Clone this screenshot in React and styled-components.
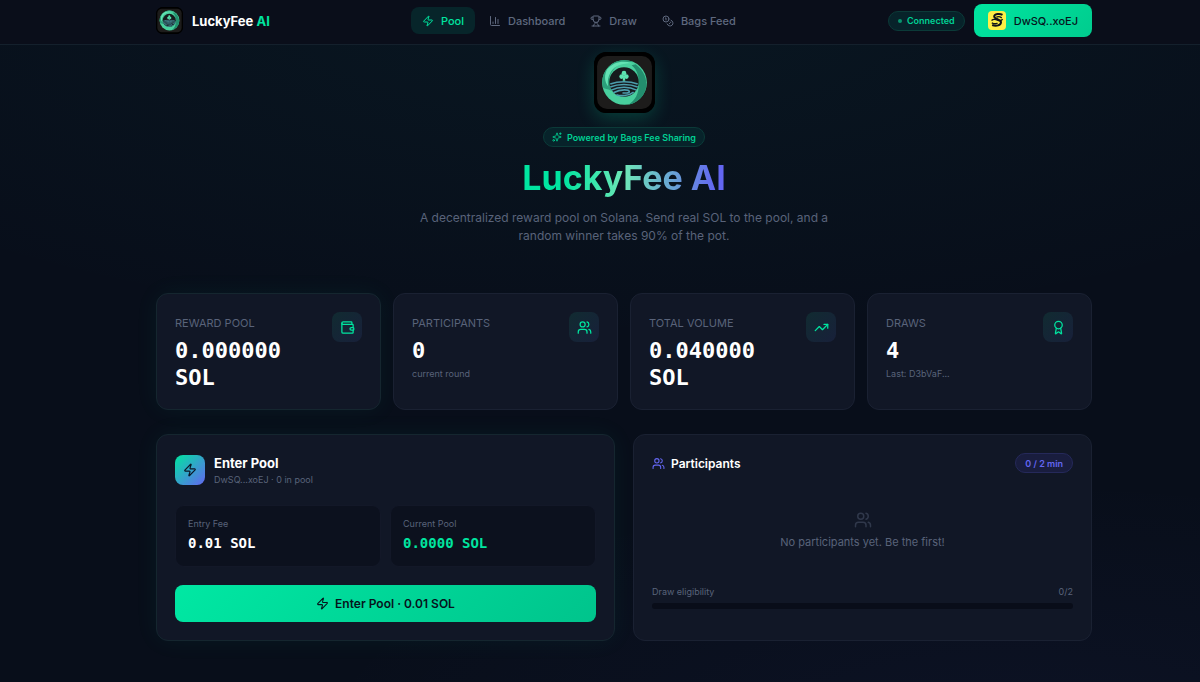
import React from "react";
import styled, { createGlobalStyle, css } from "styled-components";
import {
  Zap,
  BarChart3,
  Trophy,
  Coins,
  Sparkles,
  Wallet,
  Users,
  TrendingUp,
  Award
} from "lucide-react";

const green = "#00e5a0";
const violet = "#6366f1";
const muted = "#59637a";
const mono = `"DejaVu Sans Mono", monospace`;

const GlobalStyle = createGlobalStyle`
  * {
    box-sizing: border-box;
  }
  body {
    margin: 0;
    min-height: 100vh;
    color: #ffffff;
    font-family: Inter, sans-serif;
    font-size: 12px;
    background:
      radial-gradient(ellipse 80% 50% at 50% 0%, rgba(20, 190, 170, 0.05), transparent 100%),
      radial-gradient(ellipse 60% 40% at 85% 110%, rgba(99, 102, 241, 0.05), transparent 100%),
      #080e1a;
  }
  h1, h2, p {
    margin: 0;
  }
  button {
    font-family: inherit;
    cursor: pointer;
  }
`;

const Header = styled.header`
  display: flex;
  align-items: center;
  justify-content: space-between;
  padding: 4px 9% 7px 13%;
  background: #0a0e1a;
  border-bottom: 1px solid #14202c;
`;

const Brand = styled.a`
  display: flex;
  align-items: center;
  gap: 9px;
  color: #ffffff;
  font-size: 13px;
  font-weight: 700;
  text-decoration: none;
  span span {
    color: ${green};
  }
`;

const LogoFrame = styled.div`
  width: ${({ $large }) => ($large ? 61 : 27)}px;
  height: ${({ $large }) => ($large ? 61 : 27)}px;
  border-radius: ${({ $large }) => ($large ? 12 : 7)}px;
  overflow: hidden;
  background: #000000;
  box-shadow: ${({ $large }) =>
    $large ? "0 6px 18px rgba(0, 229, 160, 0.2)" : "none"};
  svg {
    display: block;
    width: 100%;
    height: 100%;
  }
`;

const Nav = styled.nav`
  display: flex;
  gap: 3px;
`;

const NavLink = styled.a`
  display: flex;
  align-items: center;
  gap: 7px;
  height: 27px;
  padding: 0 11px;
  border-radius: 8px;
  font-size: 11px;
  font-weight: 500;
  text-decoration: none;
  color: ${({ $active }) => ($active ? green : "#5f697f")};
  background: ${({ $active }) => ($active ? "#07252a" : "transparent")};
`;

const Account = styled.div`
  display: flex;
  align-items: center;
  gap: 9px;
`;

const Pill = styled.span`
  display: inline-flex;
  align-items: center;
  gap: 5px;
  height: 20px;
  padding: 0 9px;
  border-radius: 10px;
  font-size: 9px;
  font-weight: 600;
  ${({ $violet }) =>
    $violet
      ? css`
          color: ${violet};
          background: #191d3e;
          border: 1px solid #25295a;
        `
      : css`
          color: #00d194;
          background: #07232a;
          border: 1px solid #0b3a38;
        `}
`;

const Dot = styled.i`
  width: 4px;
  height: 4px;
  border-radius: 50%;
  background: #08946e;
`;

const WalletButton = styled.button`
  display: flex;
  align-items: center;
  gap: 8px;
  height: 33px;
  padding: 0 14px;
  border: none;
  border-radius: 8px;
  color: #07131c;
  font-size: 11px;
  font-weight: 500;
  background: linear-gradient(135deg, #00e5a0, #00cc8e);
`;

const Main = styled.main`
  padding: 7px 9% 41px 13%;
`;

const Hero = styled.section`
  display: flex;
  flex-direction: column;
  align-items: center;
  text-align: center;
  margin-bottom: 48px;
`;

const HeroPill = styled(Pill)`
  margin-top: 14px;
  padding: 0 8px;
`;

const Title = styled.h1`
  margin-top: 9px;
  font-size: 34px;
  line-height: 44px;
  font-weight: 700;
  color: transparent;
  background: linear-gradient(90deg, ${green} 0%, ${green} 20%, #6ee7b7 50%, ${violet} 95%);
  background-clip: text;
`;

const Lead = styled.p`
  max-width: 420px;
  margin-top: 9px;
  color: ${muted};
  font-size: 12px;
  line-height: 18px;
`;

const Stats = styled.section`
  display: grid;
  grid-template-columns: repeat(4, 1fr);
  gap: 12px;
  margin-bottom: 24px;
`;

const Card = styled.section`
  padding: 18px;
  border: 1px solid ${({ $glow }) => ($glow ? "#15262f" : "#1a2132")};
  border-radius: 12px;
  background: #111726;
  box-shadow: ${({ $glow }) =>
    $glow ? "0 0 24px rgba(0, 229, 160, 0.06)" : "none"};
`;

const StatCard = styled(Card)`
  display: flex;
  justify-content: space-between;
  min-height: 117px;
`;

const StatLabel = styled.p`
  margin-top: 3px;
  color: ${muted};
  font-size: 11px;
  line-height: 16px;
  text-transform: uppercase;
`;

const StatValue = styled.p`
  margin-top: 6px;
  font-family: ${mono};
  font-size: 22px;
  font-weight: 700;
  line-height: 27px;
`;

const StatNote = styled.p`
  margin-top: 3px;
  color: ${muted};
  font-size: 9px;
  line-height: 14px;
`;

const IconTile = styled.div`
  display: flex;
  flex-shrink: 0;
  align-items: center;
  justify-content: center;
  width: 30px;
  height: 30px;
  border-radius: 8px;
  color: ${({ $solid }) => ($solid ? "#0b1626" : green)};
  background: ${({ $solid }) =>
    $solid
      ? `linear-gradient(135deg, #00e5a0, ${violet})`
      : "linear-gradient(135deg, #112b31, #18203a)"};
`;

const Panels = styled.div`
  display: grid;
  grid-template-columns: 1fr 1fr;
  gap: 18px;
`;

const Panel = styled(Card)`
  display: flex;
  flex-direction: column;
  min-height: 207px;
`;

const PoolHead = styled.div`
  display: flex;
  align-items: center;
  gap: 9px;
  margin-bottom: 18px;
`;

const PoolTitle = styled.h2`
  font-size: 13px;
  line-height: 20px;
  font-weight: 700;
`;

const Small = styled.p`
  color: ${muted};
  font-size: 9px;
  line-height: 14px;
`;

const Figures = styled.div`
  display: grid;
  grid-template-columns: 1fr 1fr;
  gap: 9px;
  margin-bottom: 18px;
`;

const Figure = styled.div`
  padding: 11px 12px 12px;
  border: 1px solid #131828;
  border-radius: 9px;
  background: #0c111e;
`;

const FigureValue = styled.p`
  margin-top: 2px;
  font-family: ${mono};
  font-size: 14px;
  font-weight: 700;
  line-height: 21px;
  color: ${({ $green }) => ($green ? green : "#ffffff")};
`;

const EnterButton = styled.button`
  display: flex;
  align-items: center;
  justify-content: center;
  gap: 6px;
  height: 37px;
  border: none;
  border-radius: 8px;
  color: #07131c;
  font-size: 12px;
  font-weight: 600;
  background: linear-gradient(135deg, #00e8a3, #00c48c);
`;

const ListHead = styled.div`
  display: flex;
  align-items: center;
  justify-content: space-between;
`;

const ListTitle = styled.h2`
  display: flex;
  align-items: center;
  gap: 6px;
  font-size: 12px;
  font-weight: 600;
  svg {
    color: ${violet};
  }
`;

const Empty = styled.div`
  display: flex;
  flex: 1;
  flex-direction: column;
  align-items: center;
  justify-content: center;
  gap: 5px;
  padding-top: 2px;
  color: ${muted};
  font-size: 11px;
  line-height: 16px;
  svg {
    color: #30384b;
  }
`;

const Eligibility = styled.label`
  display: grid;
  grid-template-columns: 1fr auto;
  row-gap: 4px;
  margin-bottom: 13px;
  color: ${muted};
  font-size: 9px;
  line-height: 14px;
`;

const Meter = styled.progress`
  grid-column: 1 / -1;
  appearance: none;
  display: block;
  width: 100%;
  height: 6px;
  border: none;
  border-radius: 3px;
  overflow: hidden;
  background: #090d19;
  &::-webkit-progress-bar {
    background: #090d19;
  }
  &::-webkit-progress-value {
    background: ${green};
  }
`;

const Logo = () => (
  <svg viewBox="0 0 60 60" aria-hidden="true">
    <rect width="60" height="60" rx="12" fill="#000" />
    <rect x="3" y="4" width="54" height="52" rx="10" fill="#1d1c1b" />
    <circle cx="30" cy="30" r="22" fill="#48cf9d" />
    <path d="M41 12c8 6 12 15 10 24-2 8-8 14-17 16 7-5 10-11 10-20 0-8-1-14-7-19z" fill="#238f6e" />
    <path d="M9 35c-3-11 3-22 14-26 6-2 11-1 16 1-9-1-17 2-21 9-4 6-4 12-1 19-4-2-6-1-8-3z" fill="#2b9f7a" />
    <path d="M13 17c6-7 15-9 24-6-9 0-16 2-20 8-3 5-4 9-3 15-4-5-4-12-1-17z" fill="#63e3b3" />
    <circle cx="29.5" cy="29.5" r="14.5" fill="#161a1d" />
    <g fill="#5ce3b0">
      <circle cx="29.5" cy="20.8" r="2.3" />
      <circle cx="27.2" cy="24.2" r="2.3" />
      <circle cx="31.8" cy="24.2" r="2.3" />
      <path d="M29 22.500h1l.8 5.800h-2.600z" />
    </g>
    <g fill="none" stroke="#4c9dac" strokeWidth="1.6">
      <path d="M16 31.500c8-3 19-3 27 0" />
      <path d="M16 34.500c8-3.300 19-3.300 27 0" />
      <path d="M17 37.500c4-2 8-2.800 12.500-2.800s8.500.8 12.500 2.800" />
      <path d="M19 40c4-2 7-2.700 11-2.700 6 0 6 3 2 3h-4" />
      <path d="M22 42c4 1.500 12 1.500 17-2.500" />
    </g>
  </svg>
);

const Solflare = () => (
  <svg width="18" height="19" viewBox="0 0 18 19" aria-hidden="true">
    <rect width="18" height="19" rx="4" fill="#ffef46" />
    <g fill="none" stroke="#12151a">
      <path
        d="M14.500 3.800C12 2.300 6.200 2.600 6.200 5.600c0 2.800 6.800 2.600 6.800 5.700 0 3-4.800 4.300-8.800 2.700"
        strokeWidth="2"
      />
      <path
        d="M13.800 6.800c-2-1.300-4-1.500-5.300-.6M3.500 9.500c2-1.700 4.300-1.100 6-.3s3.500.6 5.200-.9M3.800 11.900c2 1 4.200 1.200 5.700.3"
        strokeWidth="1.4"
      />
    </g>
  </svg>
);

const links = [
  { label: "Pool", icon: Zap, active: true },
  { label: "Dashboard", icon: BarChart3 },
  { label: "Draw", icon: Trophy },
  { label: "Bags Feed", icon: Coins }
];

const stats = [
  { label: "Reward Pool", value: "0.000000 SOL", icon: Wallet, glow: true },
  { label: "Participants", value: "0", note: "current round", icon: Users },
  { label: "Total Volume", value: "0.040000 SOL", icon: TrendingUp },
  { label: "Draws", value: "4", note: "Last: D3bVaF...", icon: Award }
];

export default () => {
  return (
    <>
      <GlobalStyle />
      <Header>
        <Brand href="#">
          <LogoFrame>
            <Logo />
          </LogoFrame>
          <span>
            LuckyFee <span>AI</span>
          </span>
        </Brand>
        <Nav>
          {links.map(({ label, icon: Icon, active }) => (
            <NavLink key={label} href="#" $active={active}>
              <Icon size={12} />
              {label}
            </NavLink>
          ))}
        </Nav>
        <Account>
          <Pill>
            <Dot />
            Connected
          </Pill>
          <WalletButton>
            <Solflare />
            DwSQ..xoEJ
          </WalletButton>
        </Account>
      </Header>
      <Main>
        <Hero>
          <LogoFrame $large>
            <Logo />
          </LogoFrame>
          <HeroPill>
            <Sparkles size={10} />
            Powered by Bags Fee Sharing
          </HeroPill>
          <Title>LuckyFee AI</Title>
          <Lead>
            A decentralized reward pool on Solana. Send real SOL to the pool,
            and a random winner takes 90% of the pot.
          </Lead>
        </Hero>
        <Stats>
          {stats.map(({ label, value, note, icon: Icon, glow }) => (
            <StatCard key={label} $glow={glow}>
              <div>
                <StatLabel>{label}</StatLabel>
                <StatValue>{value}</StatValue>
                {note ? <StatNote>{note}</StatNote> : null}
              </div>
              <IconTile>
                <Icon size={15} />
              </IconTile>
            </StatCard>
          ))}
        </Stats>
        <Panels>
          <Panel $glow>
            <PoolHead>
              <IconTile $solid>
                <Zap size={14} />
              </IconTile>
              <div>
                <PoolTitle>Enter Pool</PoolTitle>
                <Small>DwSQ...xoEJ · 0 in pool</Small>
              </div>
            </PoolHead>
            <Figures>
              <Figure>
                <Small>Entry Fee</Small>
                <FigureValue>0.01 SOL</FigureValue>
              </Figure>
              <Figure>
                <Small>Current Pool</Small>
                <FigureValue $green>0.0000 SOL</FigureValue>
              </Figure>
            </Figures>
            <EnterButton>
              <Zap size={13} />
              Enter Pool · 0.01 SOL
            </EnterButton>
          </Panel>
          <Panel>
            <ListHead>
              <ListTitle>
                <Users size={13} />
                Participants
              </ListTitle>
              <Pill $violet>0 / 2 min</Pill>
            </ListHead>
            <Empty>
              <Users size={18} />
              <p>No participants yet. Be the first!</p>
            </Empty>
            <Eligibility>
              <span>Draw eligibility</span>
              <span>0/2</span>
              <Meter value={0} max={2} />
            </Eligibility>
          </Panel>
        </Panels>
      </Main>
    </>
  );
};
